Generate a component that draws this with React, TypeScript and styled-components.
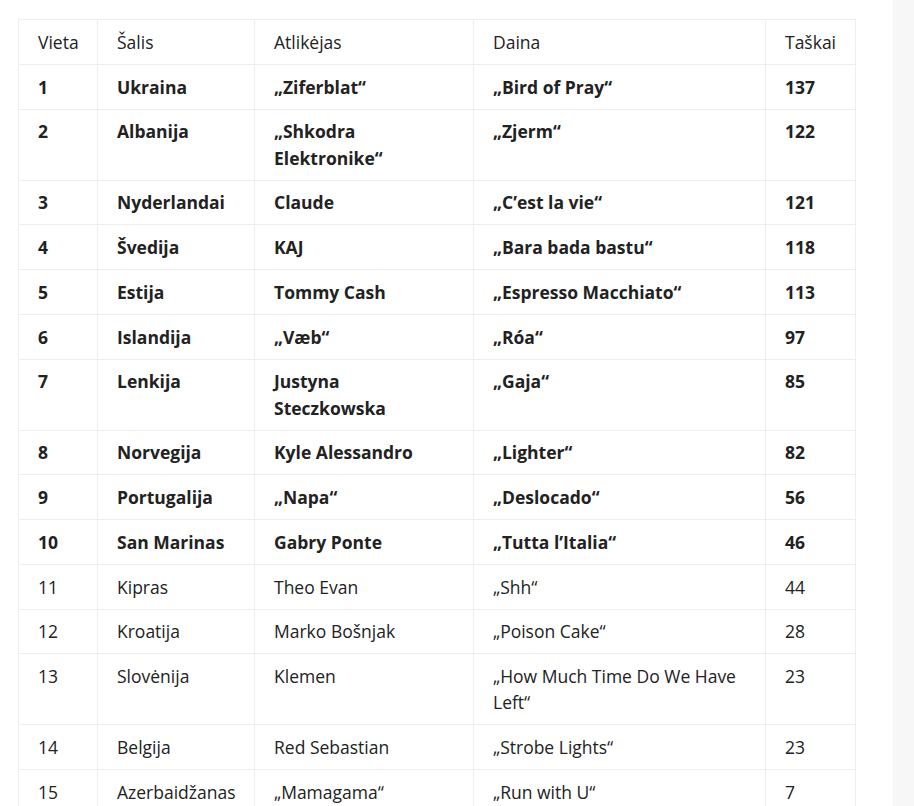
import React from "react";
import styled, { createGlobalStyle } from "styled-components";

const Global = createGlobalStyle`
  html, body { margin: 0; padding: 0; background: #f7f7f7; }
  body { font-family: "Open Sans", "Noto Sans", sans-serif; color: #222; }
`;

const Page = styled.div`
  display: flex;
  min-height: 806px;
`;

const Main = styled.main`
  width: 893px;
  flex: none;
  background: #fff;
  padding: 19px 0 0 18px;
  box-sizing: border-box;
`;

const Side = styled.aside`
  flex: 1;
  background: #f7f7f7;
`;

const Table = styled.table`
  border-collapse: collapse;
  table-layout: fixed;
  width: 837px;
  font-size: 17.5px;
  line-height: 26.25px;
  color: #222;
`;

const Cell = styled.td<{ $bold?: boolean }>`
  border: 1px solid #eeeeee;
  padding: 8.75px 20px 8.75px 19px;
  vertical-align: top;
  text-align: left;
  font-weight: ${(p) => (p.$bold ? 700 : 400)};
`;

const Head = styled.th`
  border: 1px solid #eeeeee;
  padding: 8.75px 20px 8.75px 19px;
  vertical-align: top;
  text-align: left;
  font-weight: 400;
`;

type Row = [number, string, string, string, number];

const rows: Row[] = [
  [1, "Ukraina", "„Ziferblat“", "„Bird of Pray“", 137],
  [2, "Albanija", "„Shkodra Elektronike“", "„Zjerm“", 122],
  [3, "Nyderlandai", "Claude", "„C’est la vie“", 121],
  [4, "Švedija", "KAJ", "„Bara bada bastu“", 118],
  [5, "Estija", "Tommy Cash", "„Espresso Macchiato“", 113],
  [6, "Islandija", "„Væb“", "„Róa“", 97],
  [7, "Lenkija", "Justyna Steczkowska", "„Gaja“", 85],
  [8, "Norvegija", "Kyle Alessandro", "„Lighter“", 82],
  [9, "Portugalija", "„Napa“", "„Deslocado“", 56],
  [10, "San Marinas", "Gabry Ponte", "„Tutta l’Italia“", 46],
  [11, "Kipras", "Theo Evan", "„Shh“", 44],
  [12, "Kroatija", "Marko Bošnjak", "„Poison Cake“", 28],
  [13, "Slovėnija", "Klemen", "„How Much Time Do We Have Left“", 23],
  [14, "Belgija", "Red Sebastian", "„Strobe Lights“", 23],
  [15, "Azerbaidžanas", "„Mamagama“", "„Run with U“", 7],
];

const widths = [79, 157, 219, 292, 90];

export default function App() {
  return (
    <>
      <Global />
      <Page>
        <Main>
          <Table>
            <colgroup>
              {widths.map((w, i) => (
                <col key={i} style={{ width: w }} />
              ))}
            </colgroup>
            <thead>
              <tr>
                <Head>Vieta</Head>
                <Head>Šalis</Head>
                <Head>Atlikėjas</Head>
                <Head>Daina</Head>
                <Head>Taškai</Head>
              </tr>
            </thead>
            <tbody>
              {rows.map((r) => {
                const bold = r[0] <= 10;
                return (
                  <tr key={r[0]}>
                    {r.map((v, i) => (
                      <Cell key={i} $bold={bold}>
                        {v}
                      </Cell>
                    ))}
                  </tr>
                );
              })}
            </tbody>
          </Table>
        </Main>
        <Side />
      </Page>
    </>
  );
}
